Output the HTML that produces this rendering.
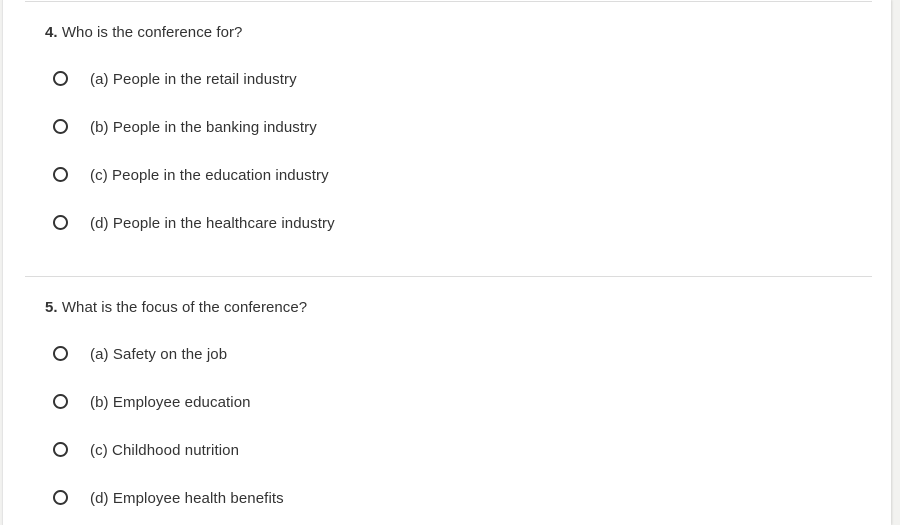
<!DOCTYPE html>
<html><head><style>
body{margin:0;width:900px;height:525px;background:#f2f2f0;font-family:"Liberation Sans",Arial,sans-serif;color:#333;overflow:hidden;position:relative}
.card{position:absolute;left:2px;top:0;width:888px;height:525px;background:#fff;border-left:1px solid #e4e4e4;box-shadow:1px 0 2px rgba(0,0,0,.12)}
.hr{position:absolute;left:25px;width:847px;height:1px;background:#dcdcdc}
.q{position:absolute;left:45px;font-size:15px;letter-spacing:0.05px}
.o{position:absolute;left:90px;font-size:15px;letter-spacing:0.1px}
.r{position:absolute;left:53px;width:11px;height:11px;border:2px solid #333;border-radius:50%}
</style></head><body>
<div class="card"></div>
<div class="hr" style="top:1px"></div>
<div class="hr" style="top:276px"></div>
<div class="q" style="top:24px"><b>4.</b> Who is the conference for?</div>
<div class="r" style="top:71px"></div><div class="o" style="top:71px">(a) People in the retail industry</div>
<div class="r" style="top:119px"></div><div class="o" style="top:119px">(b) People in the banking industry</div>
<div class="r" style="top:167px"></div><div class="o" style="top:167px">(c) People in the education industry</div>
<div class="r" style="top:215px"></div><div class="o" style="top:215px">(d) People in the healthcare industry</div>
<div class="q" style="top:299px"><b>5.</b> What is the focus of the conference?</div>
<div class="r" style="top:346px"></div><div class="o" style="top:346px">(a) Safety on the job</div>
<div class="r" style="top:394px"></div><div class="o" style="top:394px">(b) Employee education</div>
<div class="r" style="top:442px"></div><div class="o" style="top:442px">(c) Childhood nutrition</div>
<div class="r" style="top:490px"></div><div class="o" style="top:490px">(d) Employee health benefits</div>
</body></html>
